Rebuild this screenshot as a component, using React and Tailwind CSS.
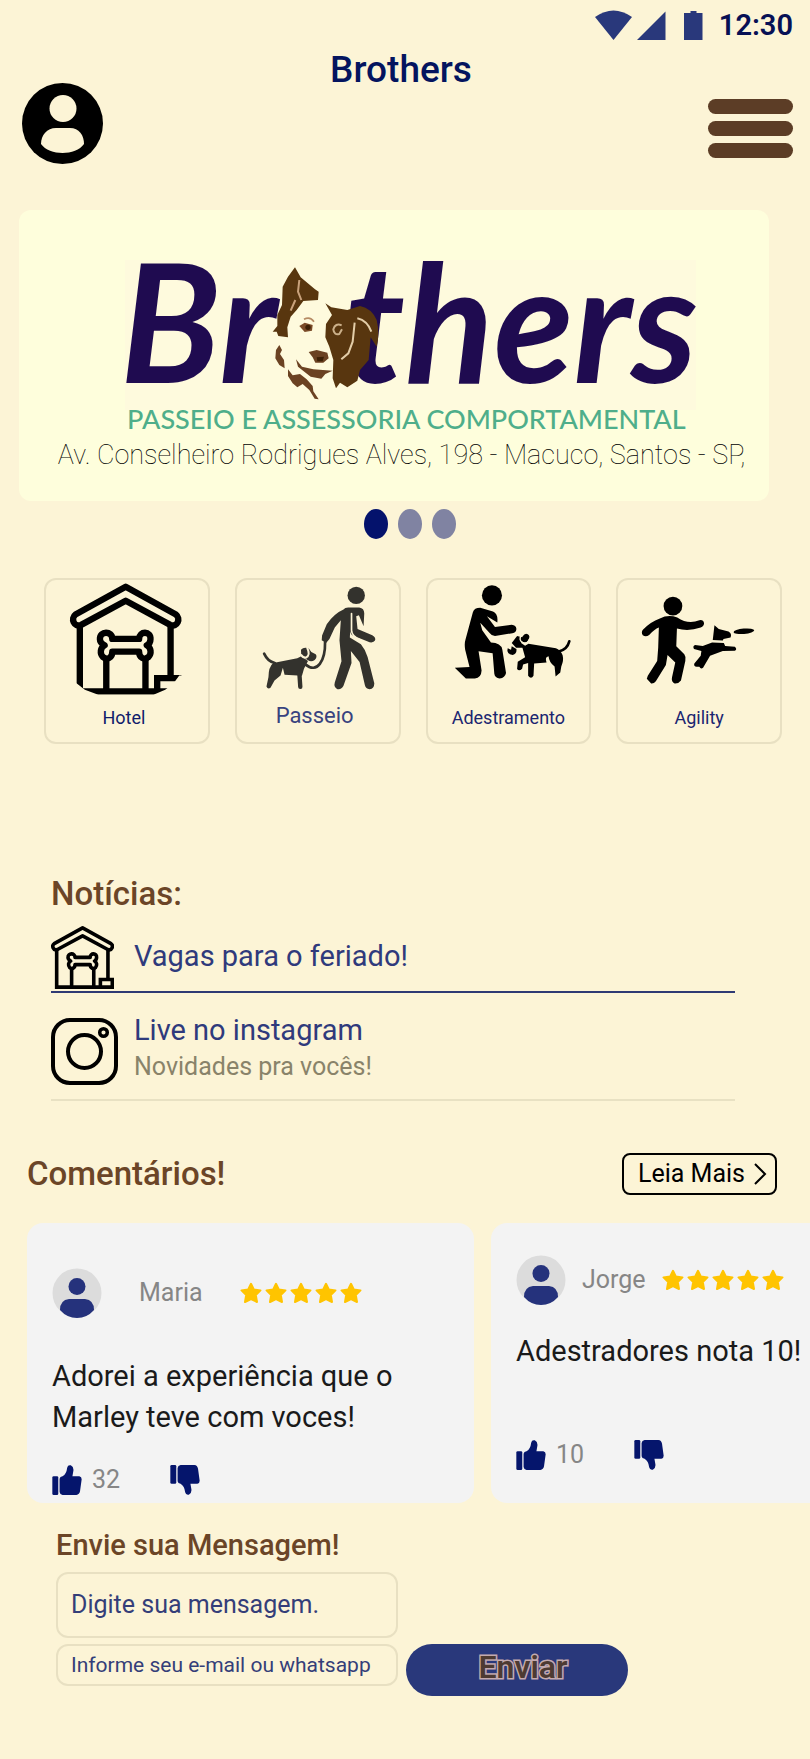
import React from "react";

function StatusIcons() {
  return (
    <svg viewBox="0 0 108 30" className="h-[30px] w-[108px]" fill="#29387b" aria-hidden="true">
      <path d="M0 7 Q18.500 -6 37 7 L18.500 30Z" />
      <path d="M42 30 L70.500 1.500 V30Z" />
      <path d="M89 3 H95.500 V1 H101.500 V3 H107.500 V30 H89Z" />
    </svg>
  );
}

function AccountIcon() {
  return (
    <svg viewBox="0 0 81 81" className="size-[81px]" aria-hidden="true">
      <circle cx="40.500" cy="40.500" r="40.500" />
      <circle cx="41" cy="25.500" r="13.500" fill="#fcf4d6" />
      <path d="M34 45 H48 C57 45 62 52 62 61 C58 67 49 70 40.500 70 C32 70 23 67 19 61 C19 52 25 45 34 45Z" fill="#fcf4d6" />
    </svg>
  );
}

function DogFace() {
  return (
    <g transform="translate(260 250) scale(0.33333)">
      <path d="M70 190 L85 250 L60 320 L95 365 L170 400 L225 390 L225 250 L215 175 L165 150 L120 155Z" fill="#fefadd" />
      <path d="M105 52 L122 82 L165 118 L176 125 L174 150 L130 153 L110 180 L92 200 L82 232 L84 262 L55 258 L50 245 L38 245 L52 228 L52 195 L66 165 L68 110 L84 80Z" fill="#58360f" />
      <path d="M118 90 L114 125 L124 150 M106 150 L92 182" stroke="#c9a27c" strokeWidth="6" fill="none" />
      <path d="M196 160 L214 172 L262 180 L300 168 Q335 175 350 210 Q360 250 350 290 L332 262 L326 330 L300 360 L292 392 L262 412 L240 398 L228 415 L218 385 L220 330 L208 290 L196 262 L198 222 L216 195Z" fill="#58360f" />
      <path d="M292 205 Q322 212 334 245 M284 218 L278 275 L265 310 L244 328" stroke="#e3cda8" strokeWidth="6" fill="none" />
      <path d="M245 226 Q226 218 220 238 Q222 256 238 252 L246 238" stroke="#cbb08a" strokeWidth="6" fill="none" />
      <path d="M132 208 Q150 198 162 215" stroke="#b58a63" strokeWidth="5" fill="none" />
      <path d="M118 228 L134 218 L158 225 L156 242 L134 246Z" fill="#7a4b28" />
      <circle cx="144" cy="232" r="8" fill="#3c2006" />
      <path d="M146 306 L170 300 L202 308 L206 325 L190 338 L166 338 L158 322Z" fill="#6b4222" />
      <path d="M170 322 L192 320 L188 334 L172 334Z" fill="#3c2006" />
      <path d="M108 328 L126 350 L160 358 L218 362 L196 372 L184 386 L152 380 L134 366 L114 350Z" fill="#6b4222" />
      <path d="M58 285 L66 300 L60 312 L72 330 L74 355 L58 345 L46 325 L48 300Z" fill="#6b4222" />
      <path d="M84 358 L98 376 L120 372 L140 388 L158 408 L160 424 L176 448 L164 446 L148 420 L128 402 L112 412 L98 400 L84 378Z" fill="#6b4222" />
    </g>
  );
}

function Logo() {
  return (
    <svg viewBox="19 210 750 224" className="block w-full" role="img" aria-label="Brothers, passeio e assessoria comportamental">
      <rect x="125" y="260" width="571" height="150" fill="#fefadd" />
      <g fill="#1f0b50" fontFamily="Lato, sans-serif" fontWeight="700" fontStyle="italic" fontSize="164">
        <text x="120" y="383">Br</text>
        <text x="345" y="383">thers</text>
      </g>
      <DogFace />
      <text x="127" y="429" fill="#4fae8a" fontFamily="Lato, sans-serif" fontWeight="500" fontSize="27">
        PASSEIO E ASSESSORIA COMPORTAMENTAL
      </text>
    </svg>
  );
}

function HouseShape() {
  return (
    <g fill="none" stroke="#000" strokeWidth="19" strokeLinejoin="round">
      <path d="M287 80 L137 163 C122 174 132 203 154 194 L287 122 L420 194 C442 203 452 174 437 163Z" />
      <path d="M150 196 V393 H444 V353 H381 V393 M421 196 V353 M229 292 V393 M346 292 V393" strokeLinejoin="miter" />
      <path d="M247 236 H327 C327 211 363 211 361 237 C361 247 356 252 350 255 C363 262 365 280 355 290 C343 300 327 293 327 274 H247 C247 293 231 300 219 290 C209 280 211 262 224 255 C218 252 210 247 210 237 C209 211 247 211 247 236Z" />
    </g>
  );
}

function HotelIcon() {
  return (
    <svg viewBox="49 60 483 345" className="block w-full" aria-hidden="true">
      <clipPath id="house-edge">
        <path d="M100 60 H470 V345 H447 L430 368 L405 388 L370 403 H205 L165 388 L140 368 L100 368Z" />
      </clipPath>
      <g clipPath="url(#house-edge)">
        <HouseShape />
      </g>
    </svg>
  );
}

function WalkIcon() {
  return (
    <svg viewBox="620 60 483 345" className="block w-full" fill="#33322d" stroke="#33322d" strokeWidth="0" strokeLinecap="round" strokeLinejoin="round" aria-hidden="true">
      <circle cx="976" cy="106" r="26" />
      <path d="M938 148 Q942 142 952 142 H985 Q1000 144 1000 160 L998 198 L984 165 L976 168 L980 206 L1024 225 Q1036 232 1032 241 Q1028 248 1016 246 L966 226 Q958 222 958 210 L957 232 L990 252 Q1005 270 1010 290 L1030 368 Q1030 384 1016 386 Q1004 384 1002 374 L986 305 L960 272 L962 308 L938 376 Q932 388 920 386 Q908 380 912 366 L932 303 L926 240 L930 180 L912 202 L896 236 L886 248 L873 240 L874 226 L888 192 Q910 160 938 148Z" />
      <path d="M962 160 L962 210 Q962 228 990 240" fill="none" stroke="#fcf4d6" strokeWidth="5" />
      <path d="M883 245 C884 300 860 342 824 312" fill="none" strokeWidth="8" />
      <path d="M728 308 L800 294 L812 288 L832 302 L820 325 L814 346 L762 343 L757 322 L750 345 L732 360 L720 382 Q712 388 708 378 L714 350 Q714 320 728 308Z" />
      <path d="M806 335 L809 379" fill="none" strokeWidth="13" />
      <path d="M733 308 Q712 304 701 280" fill="none" strokeWidth="8" />
      <path d="M811 268 Q820 259 835 265 L842 275 L855 282 Q861 290 852 299 Q842 306 832 300 L812 288Z" />
      <path d="M830 264 Q840 284 826 292 Q816 292 812 284" fill="none" stroke="#fcf4d6" strokeWidth="6" />
    </svg>
  );
}

function TrainingIcon() {
  return (
    <svg viewBox="52 60 483 345" className="block w-full" strokeLinecap="round" strokeLinejoin="round" aria-hidden="true">
      <circle cx="243" cy="106" r="30" />
      <path d="M186 156 Q190 143 208 143 L246 154 Q262 160 259 187 L228 168 L252 200 L302 194 Q315 195 316 206 Q315 217 304 219 L252 227 Q242 227 236 218 L208 188 L214 210 L240 247 Q270 248 274 268 L285 338 Q282 353 266 354 Q252 353 250 340 L245 279 L203 273 L212 330 Q211 352 192 354 H165 L132 322 L176 320 L163 268 Q160 250 164 238Z" />
      <path d="M318 227 L336 232 L330 248 L342 256 L352 250 L434 264 Q447 268 454 285 Q458 300 450 318 L447 336 L433 348 L430 318 Q414 308 412 288 Q400 290 406 306 L369 309 L367 346 Q360 358 351 346 L351 308 L336 312 L333 325 Q324 334 318 326 L320 304 L342 291 L334 262 L315 262 L302 248Z" />
      <path d="M302 258 L316 266 Q318 280 305 284 Q292 284 289 272 L290 264 L300 268Z" />
      <ellipse cx="343" cy="234" rx="10" ry="14" transform="rotate(30 343 234)" />
      <path d="M330 224 Q322 240 334 246 Q350 252 354 238" fill="none" stroke="#fcf4d6" strokeWidth="4" />
      <path d="M442 274 Q468 268 474 243" fill="none" stroke="#000" strokeWidth="8" />
    </svg>
  );
}

function AgilityIcon() {
  return (
    <svg viewBox="625 60 483 345" className="block w-full" strokeLinecap="round" strokeLinejoin="round" aria-hidden="true">
      <circle cx="789" cy="138" r="28" />
      <path d="M750 175 Q775 162 802 172 Q835 194 868 180 Q880 178 882 189 Q882 197 872 202 Q835 215 801 205 L799 258 L823 282 Q829 290 826 302 L813 360 Q806 370 794 369 Q784 364 786 352 L796 306 L773 284 L768 314 L738 362 Q732 370 724 369 L711 355 L714 346 L742 302 L745 262 L747 202 Q734 207 718 224 Q708 232 699 225 Q693 216 700 208 Q722 185 750 175Z" />
      <path d="M913 195 L926 206 L955 214 Q966 220 961 232 L940 236 L938 241 L908 239Z" />
      <path d="M906 247 L941 248 L945 257 L974 259 Q982 266 974 271 L938 272 L900 286 L879 322 Q872 327 868 319 L860 319 Q850 318 853 309 L872 286 L874 272 L852 266 Q847 257 855 254 L878 257Z" />
      <ellipse cx="1001" cy="213" rx="31" ry="8" transform="rotate(-5 1001 213)" />
    </svg>
  );
}

const services = [
  { label: "Hotel", Icon: HotelIcon, text: "pr-1.5 text-lg leading-6 text-[#101c6b]" },
  { label: "Passeio", Icon: WalkIcon, text: "pr-1.5 text-[22px] leading-5 text-[#39437f]" },
  { label: "Adestramento", Icon: TrainingIcon, text: "text-lg leading-6 text-[#1a2570]" },
  { label: "Agility", Icon: AgilityIcon, text: "text-lg leading-6 text-[#1a2570]" },
];

function InstagramIcon() {
  return (
    <svg viewBox="0 0 67 67" className="size-[67px]" fill="none" stroke="#000" strokeWidth="4" aria-hidden="true">
      <rect x="2" y="2" width="63" height="63" rx="17" />
      <circle cx="33.500" cy="33.500" r="16.500" />
      <circle cx="52.500" cy="14.500" r="3.800" strokeWidth="3.500" />
    </svg>
  );
}

function PersonAvatar() {
  return (
    <svg viewBox="0 0 50 50" className="size-[50px] shrink-0" aria-hidden="true">
      <circle cx="25" cy="25" r="24.500" fill="#dcdcdc" />
      <circle cx="25" cy="18.500" r="8.500" fill="#25327c" />
      <path d="M17 31 H33 Q42 32 42 42 Q35 50 25 50 Q15 50 8 42 Q8 32 17 31Z" fill="#25327c" />
    </svg>
  );
}

function Stars() {
  return (
    <div className="flex gap-[3px]" role="img" aria-label="5 estrelas">
      {[0, 1, 2, 3, 4].map((n) => (
        <svg key={n} viewBox="0 0 22 22" className="size-[22px]" fill="#ffc400" stroke="#ffc400" strokeWidth="2" strokeLinejoin="round">
          <path d="M11 1.800 L13.800 7.400 L20.500 8.400 L15.800 13 L17 20 L11 17 L5 20 L6.200 13 L1.500 8.400 L8.200 7.400Z" />
        </svg>
      ))}
    </div>
  );
}

function Thumb({ down }) {
  return (
    <svg viewBox="160 968 91 91" className={down ? "size-[30px] -scale-y-100" : "size-[30px]"} fill="#05156c" aria-hidden="true">
      <rect x="161" y="1002" width="18" height="57" rx="4" />
      <path d="M183 1010 Q184 1003 192 1002 Q204 995 206 976 Q208 967 217 969 Q226 973 225 985 L222 1002 H243 Q250 1003 250 1011 L245 1048 Q243 1058 234 1059 H192 Q184 1058 183 1050Z" />
    </svg>
  );
}

function Comment({ likes, children }) {
  return (
    <article className="flex h-[280px] w-[447px] shrink-0 flex-col rounded-2xl bg-[#f3f3f3] px-[25px]">
      {children}
      <div className="flex items-center">
        <button type="button" className="flex items-center gap-[10px] text-[25px] leading-8 text-[#868686]" aria-label={"Gostei: " + likes}>
          <Thumb />
          {likes}
        </button>
        <button type="button" className="ml-[50px]" aria-label="Não gostei">
          <Thumb down />
        </button>
      </div>
    </article>
  );
}

export default function App() {
  return (
    <div className="min-h-screen overflow-hidden bg-[#fcf4d6] pb-[65px] font-[Roboto,sans-serif] text-black">
      <header>
        <div className="flex items-center justify-end gap-4 pt-2 pr-[17px]">
          <StatusIcons />
          <time className="text-[29px] leading-[34px] font-semibold text-[#071055]">12:30</time>
        </div>
        <h1 className="pt-[15px] pr-2 text-center text-[37px] leading-[26px] font-medium text-[#04145f]">Brothers</h1>
        <div className="flex items-start justify-between pr-[17px] pl-[22px]">
          <button type="button" aria-label="Minha conta">
            <AccountIcon />
          </button>
          <button type="button" aria-label="Menu" className="mt-4 flex w-[85px] flex-col gap-[7px]">
            <span className="h-[15px] w-full rounded-full bg-[#5c3d26]" />
            <span className="h-[15px] w-full rounded-full bg-[#5c3d26]" />
            <span className="h-[15px] w-full rounded-full bg-[#5c3d26]" />
          </button>
        </div>
      </header>

      <main>
        <section className="mt-[46px] mr-[41px] ml-[19px] rounded-xl bg-[#fefedc] pb-[25px]" aria-label="Destaques">
          <Logo />
          <p className="pl-[15px] text-center text-[27px] leading-[42px] font-thin whitespace-nowrap text-black">
            Av. Conselheiro Rodrigues Alves, 198 - Macuco, Santos - SP,
          </p>
        </section>
        <div className="mt-2 flex justify-center gap-[10px] pl-[10px]">
          <button type="button" aria-label="Destaque 1" className="h-[30px] w-6 rounded-[50%] bg-[#04126c]" />
          <button type="button" aria-label="Destaque 2" className="h-[30px] w-6 rounded-[50%] bg-[#8083a2]" />
          <button type="button" aria-label="Destaque 3" className="h-[30px] w-6 rounded-[50%] bg-[#8083a2]" />
        </div>

        <nav className="mt-[39px] grid grid-cols-4 gap-[25px] pr-7 pl-11" aria-label="Serviços">
          {services.map(({ label, Icon, text }) => (
            <a key={label} href={"#" + label.toLowerCase()} className="block aspect-square rounded-xl border-2 border-[#e8e0c2]">
              <Icon />
              <span className={"mt-[10px] block text-center " + text}>{label}</span>
            </a>
          ))}
        </nav>

        <section className="mt-[130px] mr-[75px] ml-[51px]">
          <h2 className="text-[33px] leading-10 font-medium text-[#6b4527]">Notícias:</h2>
          <a href="#vagas" className="mt-3 flex items-start gap-5 border-b-2 border-[#2f3a74] pb-[2px]">
            <svg viewBox="120 70 333 333" className="size-[63px]" aria-hidden="true">
              <HouseShape />
            </svg>
            <span className="pt-[14px] text-[29px] leading-8 text-[#2f3a7c]">Vagas para o feriado!</span>
          </a>
          <a href="#live" className="flex items-start gap-4 border-b-2 border-[#e8e1c3] pt-[21px] pb-[14px]">
            <span className="pt-1">
              <InstagramIcon />
            </span>
            <span className="block">
              <span className="block text-[29px] leading-8 text-[#2f3a7c]">Live no instagram</span>
              <span className="block pt-[5px] text-[25px] leading-8 text-[#89836a]">Novidades pra vocês!</span>
            </span>
          </a>
        </section>

        <section className="mt-[52px] pl-[27px]">
          <div className="flex items-center justify-between pr-[33px]">
            <h2 className="text-[33px] leading-[42px] font-medium text-[#6b4527]">Comentários!</h2>
            <button type="button" className="flex h-[42px] items-center gap-2 rounded-lg border-2 border-black pr-2 pl-[14px] text-[25px]">
              Leia Mais
              <svg viewBox="0 0 14 22" className="h-[22px] w-[14px]" fill="none" stroke="#000" strokeWidth="2" aria-hidden="true">
                <path d="M2 1 L12 11 L2 21" />
              </svg>
            </button>
          </div>
          <div className="mt-7 flex gap-[17px] overflow-hidden">
            <Comment likes="32">
              <div className="mt-[45px] flex items-center">
                <PersonAvatar />
                <span className="mr-[37px] ml-[37px] text-[25px] leading-8 text-[#868686]">Maria</span>
                <Stars />
              </div>
              <p className="mt-[38px] mb-[26px] text-[29px] leading-[41px] text-[#1a1a1a]">
                Adorei a experiência que o
                <br />
                Marley teve com voces!
              </p>
            </Comment>
            <Comment likes="10">
              <div className="mt-8 flex items-center">
                <PersonAvatar />
                <span className="mr-4 ml-4 text-[25px] leading-8 text-[#868686]">Jorge</span>
                <Stars />
              </div>
              <p className="mt-[26px] mb-[67px] text-[29px] leading-[41px] text-[#1a1a1a]">Adestradores nota 10!</p>
            </Comment>
          </div>
        </section>

        <form className="mt-6 pl-14" onSubmit={(event) => event.preventDefault()}>
          <h2 className="text-[29px] leading-9 font-medium text-[#6b4527]">Envie sua Mensagem!</h2>
          <input
            type="text"
            aria-label="Mensagem"
            placeholder="Digite sua mensagem."
            className="mt-[9px] block h-[66px] w-[342px] rounded-xl border-2 border-[#e8e0c2] px-[13px] text-[25px] text-[#343e79] placeholder:text-[#343e79] placeholder:opacity-100"
          />
          <div className="mt-[6px] flex items-start gap-2">
            <input
              type="text"
              aria-label="E-mail ou whatsapp"
              placeholder="Informe seu e-mail ou whatsapp"
              className="h-[42px] w-[342px] rounded-xl border-2 border-[#e8e0c2] px-[13px] text-[21px] text-[#343e79] placeholder:text-[#343e79] placeholder:opacity-100"
            />
            <button
              type="submit"
              className="h-[52px] w-[222px] rounded-full bg-[#29387b] pb-1.5 pl-3 text-[32px] leading-8 font-semibold text-[#4d3a32] [-webkit-text-stroke:3px_#c4aaae] [paint-order:stroke_fill]"
            >
              Enviar
            </button>
          </div>
        </form>
      </main>
    </div>
  );
}
